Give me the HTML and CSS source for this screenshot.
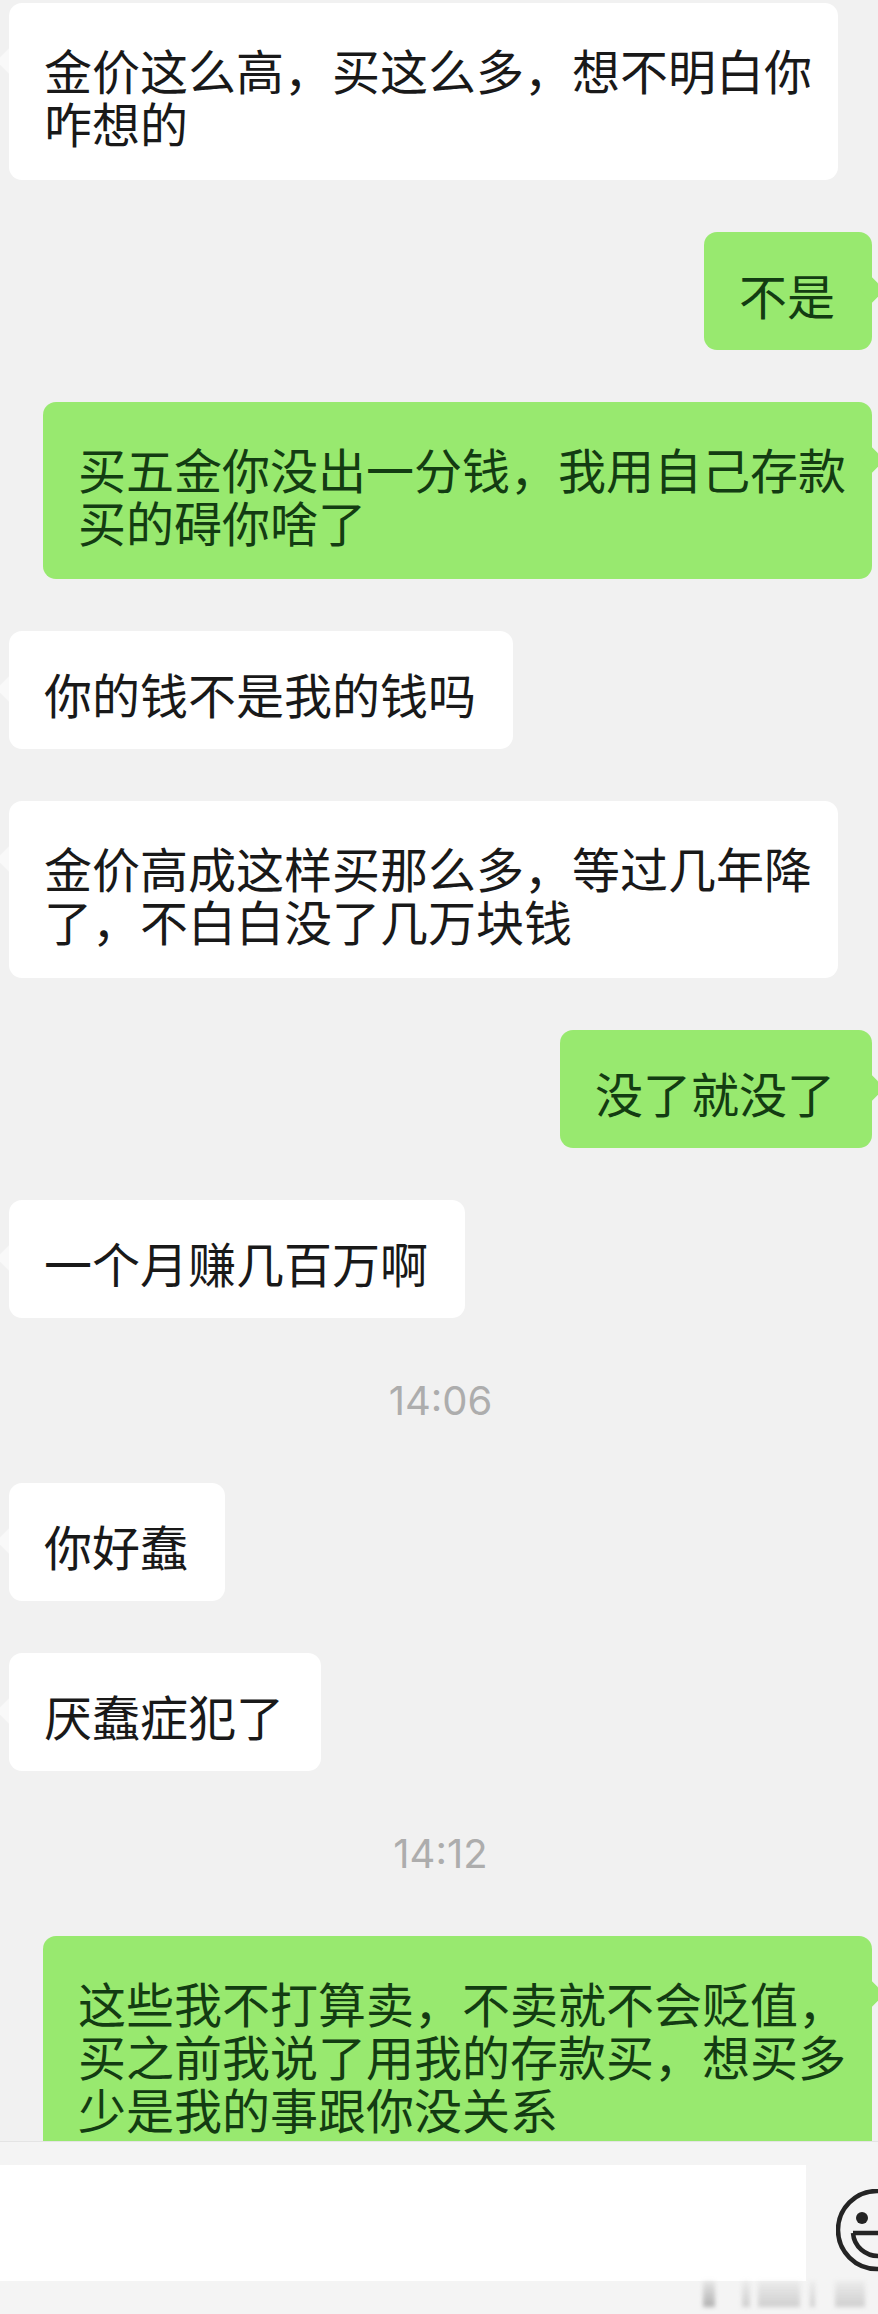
FILE: index.html
```html
<!DOCTYPE html>
<html lang="zh-CN">
  <head>
    <meta charset="utf-8">
    <title>聊天记录</title>
    <link rel="stylesheet" href="styles.css">
  </head>
  <body>
    <div class="chat">
      <div class="bubble them wide">金价这么高，买这么多，想不明白你咋想的</div>
      <div class="bubble me">不是</div>
      <div class="bubble me wide">买五金你没出一分钱，我用自己存款买的碍你啥了</div>
      <div class="bubble them">你的钱不是我的钱吗</div>
      <div class="bubble them wide">金价高成这样买那么多，等过几年降了，不白白没了几万块钱</div>
      <div class="bubble me">没了就没了</div>
      <div class="bubble them">一个月赚几百万啊</div>
      <div class="time">14:06</div>
      <div class="bubble them">你好蠢</div>
      <div class="bubble them">厌蠢症犯了</div>
      <div class="time">14:12</div>
      <div class="bubble me wide">这些我不打算卖，不卖就不会贬值，买之前我说了用我的存款买，想买多少是我的事跟你没关系</div>
    </div>
    <div class="footer">
      <div class="input"></div>
      <svg class="emoji" width="42" height="84" viewBox="0 0 42 84" fill="none" stroke="#242424" stroke-width="4.5">
        <circle cx="41" cy="41" r="39"/>
        <circle cx="26" cy="29" r="6" fill="#242424" stroke="none"/>
        <path d="M17 44H42M17 44C18 58 30 67 42 67"/>
      </svg>
      <div class="mark">
        <span class="smear s1"></span>
        <span class="smear s2"></span>
        <span class="smear s3"></span>
        <span class="smear s4"></span>
        <span class="smear s5"></span>
      </div>
    </div>
  </body>
</html>
```

FILE: styles.css
```css
html, body {
  margin: 0;
  padding: 0;
}
body {
  width: 878px;
  height: 2314px;
  overflow: hidden;
  background: #f1f1f1;
  font-family: "Noto Sans CJK SC", "Liberation Sans", sans-serif;
}
.chat {
  display: flex;
  flex-direction: column;
  gap: 52px;
  box-sizing: border-box;
  height: 2141px;
  padding: 3px 6px 0 9px;
  overflow: hidden;
}
.bubble {
  position: relative;
  flex-shrink: 0;
  box-sizing: border-box;
  padding: 36px 37px 29px 35px;
  border-radius: 13px;
  font-size: 48px;
  line-height: 53px;
  color: #191919;
}
/* the little tail on the side of each bubble */
.bubble::before {
  content: "";
  position: absolute;
  top: 49px;
  width: 18px;
  height: 18px;
  transform: rotate(45deg);
}
.them {
  align-self: flex-start;
  background: #fff;
}
.them::before {
  left: -9px;
  background: rgba(255, 255, 255, 0.55);
}
.me {
  align-self: flex-end;
  background: #98e96f;
  color: #133c12;
}
.me::before {
  right: -9px;
  background: #98e96f;
}
.wide {
  width: 829px;
  padding-top: 40px;
  padding-right: 26px;
  padding-bottom: 31px;
}
.time {
  flex-shrink: 0;
  height: 61px;
  font-family: Inter, "Liberation Sans", sans-serif;
  font-size: 40px;
  line-height: 61px;
  text-align: center;
  color: #adadad;
}
.footer {
  position: relative;
  display: flex;
  align-items: flex-start;
  height: 173px;
  padding-top: 23px;
  box-sizing: border-box;
  border-top: 1px solid #e4e4e4;
  background: #f4f4f4;
}
.input {
  width: 806px;
  height: 116px;
  background: #fff;
}
.emoji {
  margin: 24px 0 0 30px;
}
/* blurred watermark in the bottom corner */
.mark {
  position: absolute;
  left: 703px;
  top: 139px;
  display: flex;
  width: 170px;
  height: 26px;
  filter: blur(2px);
}
.smear {
  display: block;
  background: linear-gradient(rgba(205, 205, 205, 0.2), #cfcfcf);
}
.s1 { width: 12px; background: linear-gradient(rgba(170, 170, 170, 0.2), #b0b0b0); }
.s2 { width: 8px; margin-left: 27px; }
.s3 { width: 42px; margin-left: 8px; }
.s4 { width: 5px; margin-left: 10px; }
.s5 { width: 30px; margin-left: 20px; }
```
